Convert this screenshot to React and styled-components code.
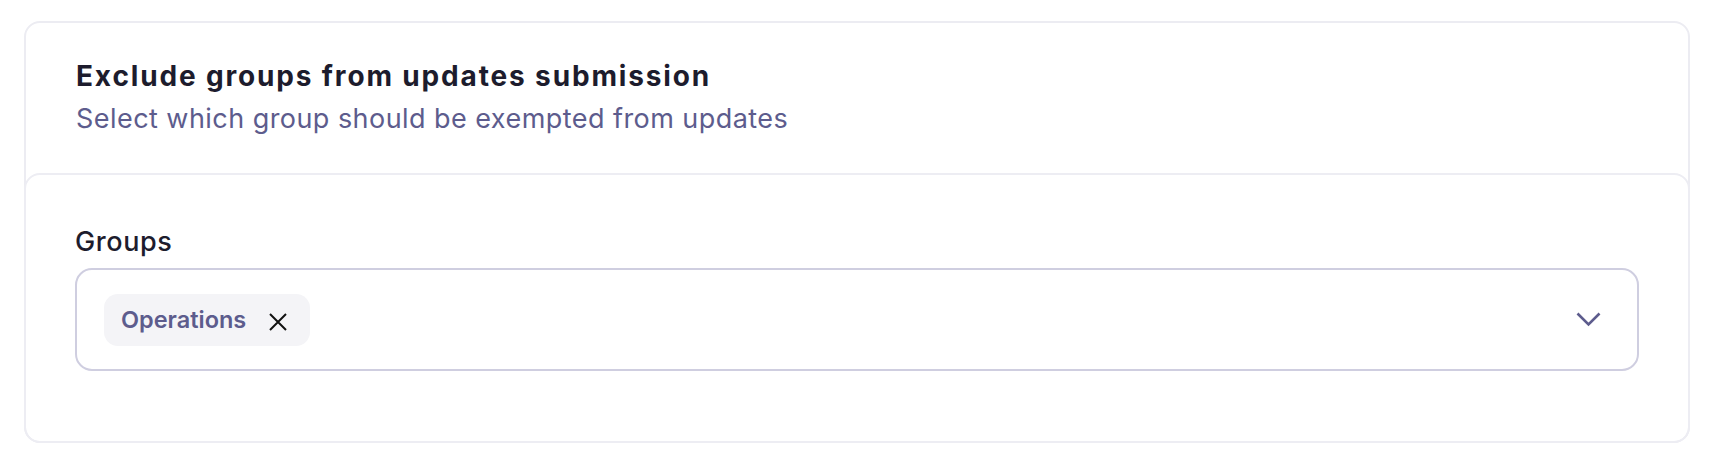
import React from "react";
import styled, {createGlobalStyle} from "styled-components";

const GlobalStyle = createGlobalStyle`
    body {
        margin: 0;
        background: #ffffff;
        font-family: Inter, "Noto Sans", sans-serif;
    }
`;

const Page = styled.div`
    padding: 21px 24px;
`;

const Card = styled.section`
    width: 1666px;
    box-sizing: border-box;
    border: 2px solid #ececf2;
    border-radius: 16px;
    background: #ffffff;
`;

const Header = styled.div`
    padding: 37px 50px 38px;
`;

const Title = styled.h2`
    margin: 0;
    font-size: 28px;
    line-height: 32px;
    font-weight: 700;
    letter-spacing: 1.85px;
    color: #1d1c2d;
`;

const Subtitle = styled.p`
    margin: 11px 0 0;
    font-size: 27px;
    line-height: 32px;
    font-weight: 400;
    letter-spacing: 0.45px;
    color: #5d5c8d;
`;

const Body = styled.div`
    margin: 0 -2px -2px;
    border: 2px solid #ededf3;
    border-radius: 16px;
    padding: 51px 49px 70px;
`;

const Label = styled.div`
    font-size: 27px;
    line-height: 32px;
    font-weight: 500;
    letter-spacing: 0.6px;
    color: #1d1c2d;
    margin-bottom: 10px;
`;

const Select = styled.div`
    display: flex;
    align-items: center;
    justify-content: space-between;
    box-sizing: border-box;
    height: 103px;
    border: 2px solid #cfcee0;
    border-radius: 17px;
    padding: 0 36px 0 27px;
`;

const Chip = styled.div`
    display: flex;
    align-items: center;
    gap: 22px;
    height: 52px;
    box-sizing: border-box;
    padding: 0 22px 0 17px;
    border-radius: 14px;
    background: #f4f4f7;
`;

const ChipText = styled.span`
    font-size: 23.5px;
    font-weight: 600;
    color: #5d5c8d;
`;

const IconButton = styled.span`
    display: flex;
    align-items: center;
    margin-top: 5px;
`;

function CloseIcon() {
    return (
        <svg width="20" height="18" viewBox="0 0 20 18" fill="none">
            <path d="M2 1 L18 17 M18 1 L2 17" stroke="#111111" strokeWidth="2" />
        </svg>
    );
}

function ChevronIcon() {
    return (
        <svg width="25" height="15" viewBox="0 0 25 15" fill="none">
            <path
                d="M1.5 1.5 L12.5 12.5 L23.5 1.5"
                stroke="#5d5c8d"
                strokeWidth="2.6"
            />
        </svg>
    );
}

export default function App() {
    return (
        <Page>
            <GlobalStyle />
            <Card>
                <Header>
                    <Title>Exclude groups from updates submission</Title>
                    <Subtitle>
                        Select which group should be exempted from updates
                    </Subtitle>
                </Header>
                <Body>
                    <Label>Groups</Label>
                    <Select>
                        <Chip>
                            <ChipText>Operations</ChipText>
                            <IconButton>
                                <CloseIcon />
                            </IconButton>
                        </Chip>
                        <ChevronIcon />
                    </Select>
                </Body>
            </Card>
        </Page>
    );
}
